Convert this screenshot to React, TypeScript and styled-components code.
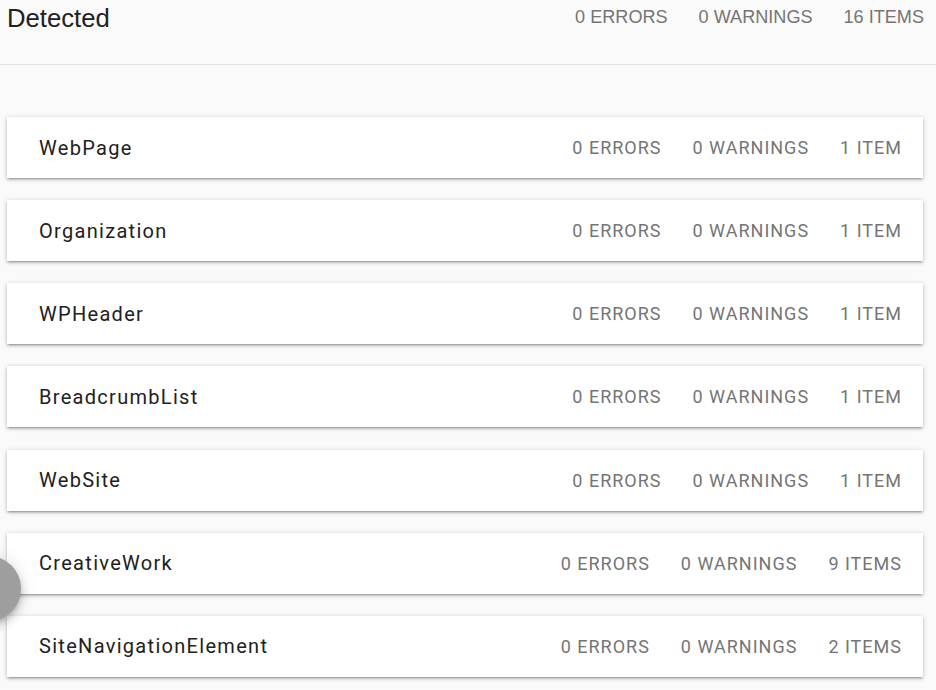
import React from "react";
import styled, { createGlobalStyle } from "styled-components";

type Entry = { name: string; errors: number; warnings: number; items: number };

const entries: Entry[] = [
  { name: "WebPage", errors: 0, warnings: 0, items: 1 },
  { name: "Organization", errors: 0, warnings: 0, items: 1 },
  { name: "WPHeader", errors: 0, warnings: 0, items: 1 },
  { name: "BreadcrumbList", errors: 0, warnings: 0, items: 1 },
  { name: "WebSite", errors: 0, warnings: 0, items: 1 },
  { name: "CreativeWork", errors: 0, warnings: 0, items: 9 },
  { name: "SiteNavigationElement", errors: 0, warnings: 0, items: 2 },
];

const plural = (n: number, word: string) => `${n} ${word}${n === 1 ? "" : "S"}`;

const App = () => {
  const total = entries.reduce((s, e) => s + e.items, 0);
  return (
    <Page>
      <GlobalStyle />
      <Header>
        <Title>Detected</Title>
        <HeaderStats>
          <span>0 ERRORS</span>
          <span>0 WARNINGS</span>
          <span>{plural(total, "ITEM")}</span>
        </HeaderStats>
      </Header>
      <List>
        {entries.map((e) => (
          <Card key={e.name}>
            <Name>{e.name}</Name>
            <Stats>
              <span>{plural(e.errors, "ERROR")}</span>
              <span>{plural(e.warnings, "WARNING")}</span>
              <span>{plural(e.items, "ITEM")}</span>
            </Stats>
          </Card>
        ))}
      </List>
      <Fab />
    </Page>
  );
};

export default App;

const GlobalStyle = createGlobalStyle`
  body {
    margin: 0;
    background: #fafafa;
    font-family: Roboto, "Liberation Sans", sans-serif;
  }
`;

const Page = styled.div`
  position: relative;
  min-height: 690px;
  overflow: hidden;
  background: #fafafa;
`;

const Header = styled.div`
  display: flex;
  align-items: flex-start;
  justify-content: space-between;
  height: 65px;
  padding: 3px 12px 0 7px;
  box-sizing: border-box;
  border-bottom: 1px solid #e0e0e0;
`;

const Title = styled.div`
  font-family: "Liberation Sans", Arial, sans-serif;
  font-size: 25.7px;
  line-height: 30px;
  color: #212121;
`;

const HeaderStats = styled.div`
  display: flex;
  gap: 31px;
  font-family: "Liberation Sans", Arial, sans-serif;
  font-size: 18.1px;
  line-height: 28px;
  color: #757575;
`;

const List = styled.div`
  display: flex;
  flex-direction: column;
  gap: 22.17px;
  padding: 52px 13px 0 7px;
`;

const Card = styled.div`
  display: flex;
  align-items: center;
  justify-content: space-between;
  height: 61px;
  padding: 0 21px 0 32px;
  background: #fff;
  box-shadow: 0 2px 2px 0 rgba(0, 0, 0, 0.14), 0 3px 1px -2px rgba(0, 0, 0, 0.12),
    0 1px 5px 0 rgba(0, 0, 0, 0.2);
`;

const Name = styled.div`
  font-size: 20px;
  letter-spacing: 1.3px;
  color: #212121;
`;

const Stats = styled.div`
  display: flex;
  gap: 31px;
  font-size: 18px;
  letter-spacing: 1px;
  color: #757575;
`;

const Fab = styled.div`
  position: absolute;
  left: -44px;
  top: 556px;
  width: 65px;
  height: 65px;
  border-radius: 50%;
  background: #9e9e9e;
  box-shadow: 0 3px 5px -1px rgba(0, 0, 0, 0.2), 0 6px 10px 0 rgba(0, 0, 0, 0.14),
    0 1px 18px 0 rgba(0, 0, 0, 0.12);
`;
